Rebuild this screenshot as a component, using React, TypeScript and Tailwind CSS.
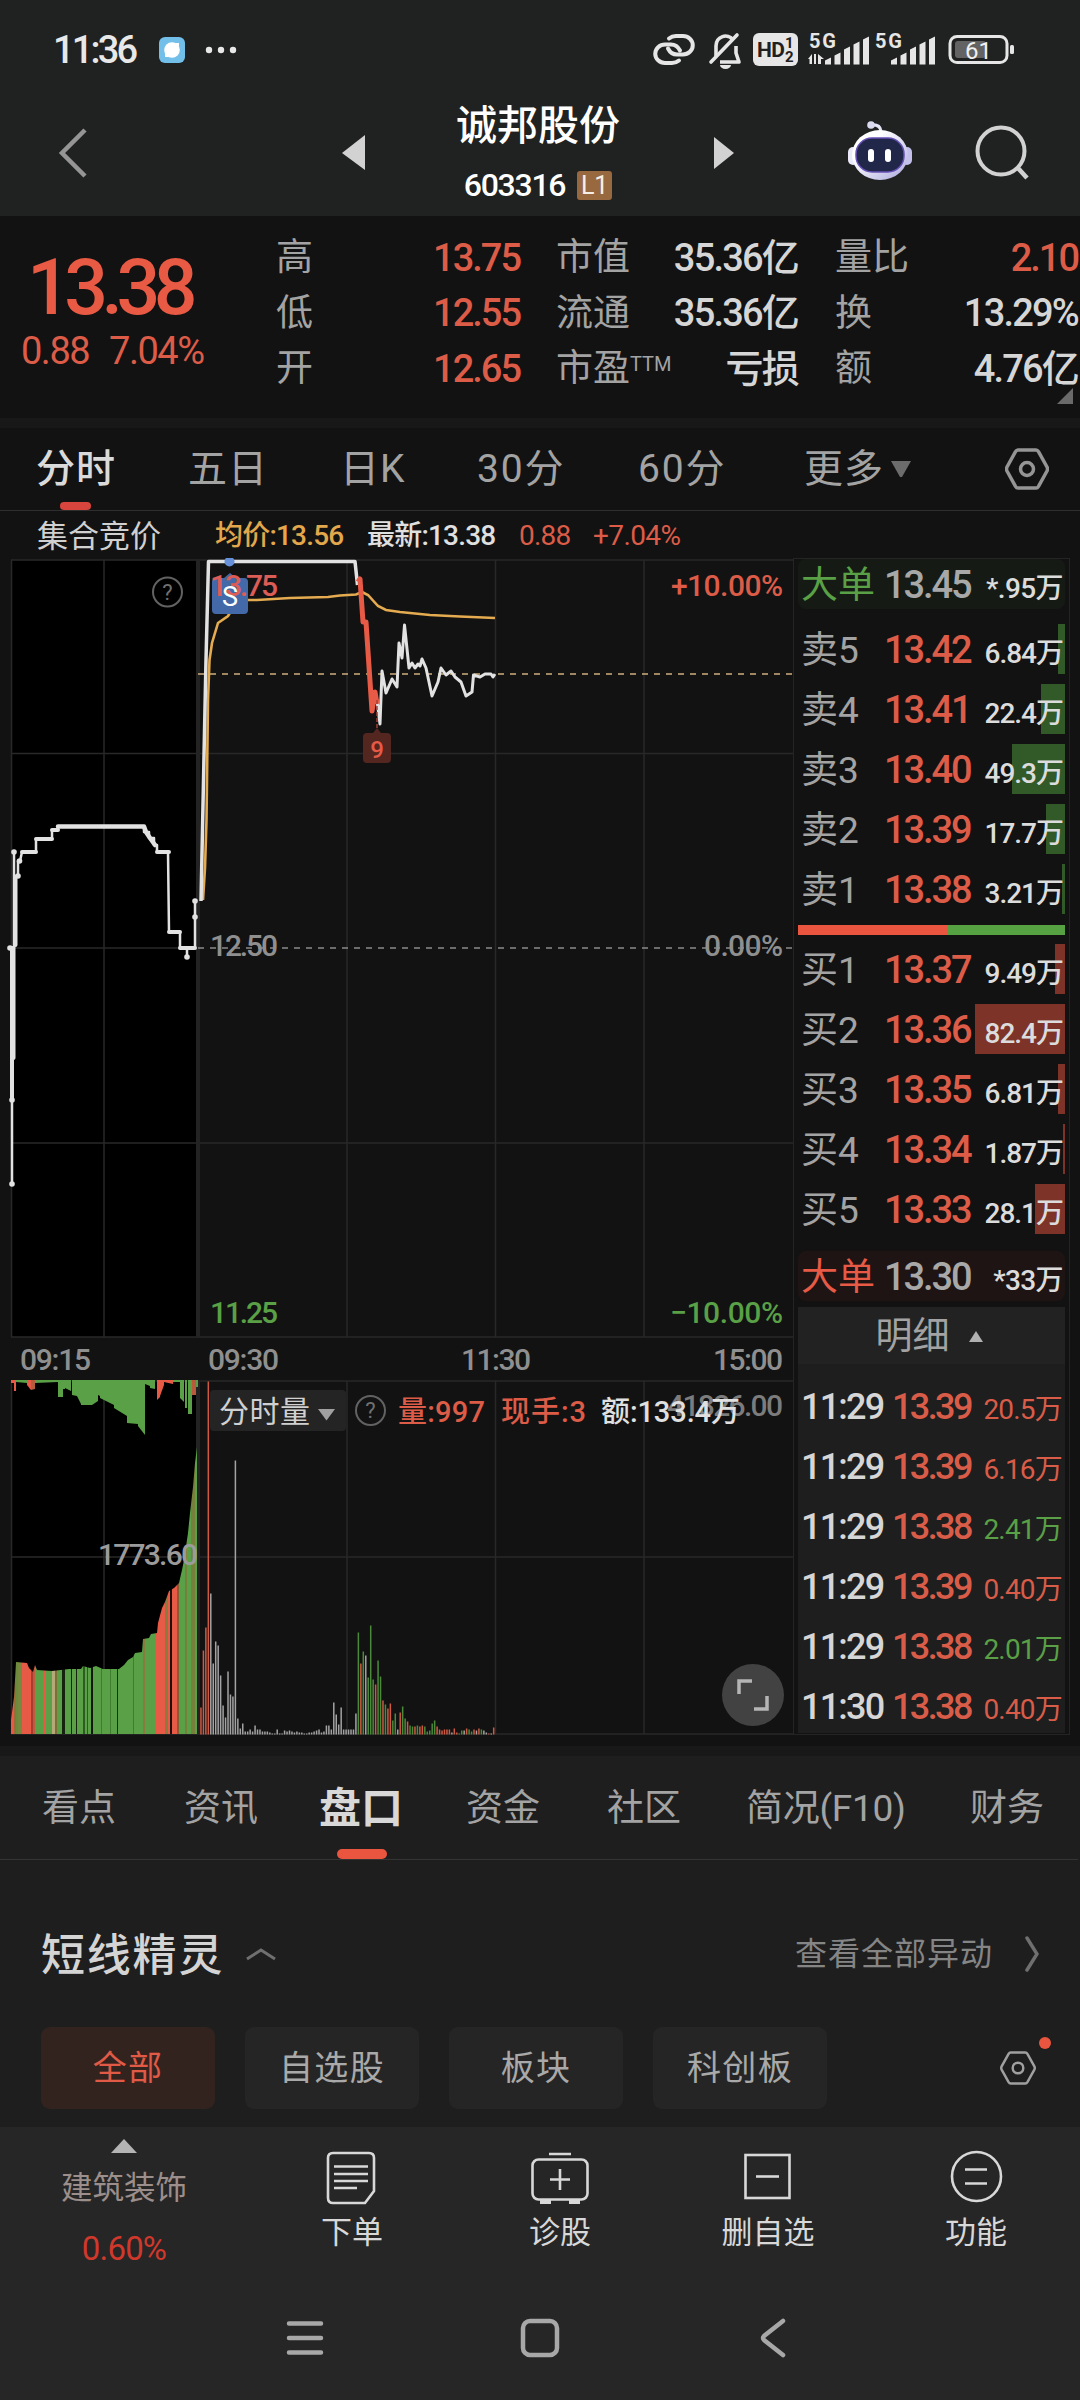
import React from 'react';

type Align = 'start' | 'middle' | 'end';

const RED = '#e65a46';
const GREEN = '#59a046';

const asks = [
  { label: '卖5', price: '13.42', vol: '6.84万', bar: 7 },
  { label: '卖4', price: '13.41', vol: '22.4万', bar: 24 },
  { label: '卖3', price: '13.40', vol: '49.3万', bar: 53 },
  { label: '卖2', price: '13.39', vol: '17.7万', bar: 19 },
  { label: '卖1', price: '13.38', vol: '3.21万', bar: 3 },
];

const bids = [
  { label: '买1', price: '13.37', vol: '9.49万', bar: 10 },
  { label: '买2', price: '13.36', vol: '82.4万', bar: 90 },
  { label: '买3', price: '13.35', vol: '6.81万', bar: 7 },
  { label: '买4', price: '13.34', vol: '1.87万', bar: 2 },
  { label: '买5', price: '13.33', vol: '28.1万', bar: 30 },
];

const ticks = [
  { time: '11:29', price: '13.39', vol: '20.5万', up: true },
  { time: '11:29', price: '13.39', vol: '6.16万', up: true },
  { time: '11:29', price: '13.38', vol: '2.41万', up: false },
  { time: '11:29', price: '13.39', vol: '0.40万', up: true },
  { time: '11:29', price: '13.38', vol: '2.01万', up: false },
  { time: '11:30', price: '13.38', vol: '0.40万', up: true },
];

// one bar per minute, 09:30 - 11:30
const minuteVolumes = [
  27, 84, 107, 353, 141, 71, 93, 89, 59, 29, 17, 63, 40, 38, 274, 16, 6, 11, 3, 3,
  5, 3, 9, 5, 5, 3, 3, 3, 2, 1, 1, 5, 1, 1, 4, 3, 4, 3, 2, 3,
  2, 2, 1, 1, 2, 2, 3, 4, 5, 2, 3, 9, 9, 5, 32, 20, 10, 27, 5, 5,
  5, 5, 5, 21, 102, 71, 83, 79, 57, 109, 55, 50, 74, 58, 34, 30, 26, 31, 14, 21,
  5, 22, 28, 16, 13, 9, 8, 8, 9, 8, 9, 8, 3, 4, 11, 14, 8, 5, 4, 5,
  5, 5, 2, 6, 2, 1, 4, 4, 6, 5, 3, 5, 4, 6, 5, 4, 2, 1, 1, 7,
];
const minuteColors =
  'rrrr' + 'w'.repeat(60) + 'grgwgggrggrgrrggwrggrggrgrrgggggrrrrrrwrrggwrggrwrgwwrwr';

// auction volume outline: x, top
const auctionOutline: [number, number][] = [
  [11, 1720], [14, 1697], [16, 1662], [27, 1663], [29, 1668], [33, 1672], [35, 1665], [37, 1670],
  [52, 1671], [69, 1669], [81, 1669], [83, 1666], [90, 1668], [96, 1666], [103, 1669], [119, 1669],
  [124, 1665], [128, 1660], [133, 1657], [135, 1653], [142, 1652], [143, 1639], [149, 1638],
  [151, 1634], [157, 1633], [158, 1623], [162, 1608], [165, 1602], [169, 1591], [174, 1588],
  [179, 1583], [182, 1570], [184, 1560], [188, 1533], [190, 1513], [193, 1487], [195, 1463], [197, 1447],
];

// stripes painted inside the auction outline: from, to, colour
const auctionStripes: [number, number, string][] = [
  [11, 14, RED], [14, 16, '#9c6b38'], [16, 18, '#6b8a3c'], [18, 22, '#79883f'], [22, 31, RED],
  [31, 33, '#a83c2f'], [33, 35, '#c05a3e'], [35, 43, GREEN], [43, 46, RED], [46, 52, GREEN],
  [52, 55, '#b6a878'], [55, 57, '#7d6f36'], [57, 62, GREEN], [62, 65, '#16240f'], [65, 71, GREEN],
  [71, 72, '#16240f'], [72, 76, GREEN], [76, 77, '#16240f'], [77, 83, GREEN], [83, 85, '#2e5b22'],
  [85, 87, GREEN], [87, 88, '#2e5b22'], [88, 91, GREEN], [91, 93, '#10180c'], [93, 101, GREEN],
  [101, 102, '#3f7d2f'], [102, 110, GREEN], [110, 111, '#3f7d2f'], [111, 117, GREEN],
  [117, 118, '#1b3313'], [118, 133, GREEN], [133, 134, '#3f7d2f'], [134, 143, GREEN],
  [143, 145, '#8a7a40'], [145, 156, GREEN], [156, 165, RED], [165, 168, '#8a7a40'],
  [168, 170, RED], [170, 172, '#1d0f0b'], [172, 177, RED], [177, 179, '#8a5a34'],
  [179, 185, GREEN], [185, 187, '#77803a'], [187, 191, GREEN], [191, 195, '#77803a'], [195, 197, GREEN],
];

// unmatched auction volume, hanging from the top: from, to, left depth, right depth, colour
const hanging: [number, number, number, number, string][] = [
  [11, 14, 3, 3, RED], [14, 16, 11, 11, RED], [16, 27, 2, 3, GREEN], [27, 31, 5, 10, RED],
  [31, 35, 10, 9, '#b85a3c'], [35, 58, 3, 2, GREEN], [58, 63, 17, 17, GREEN], [63, 65, 9, 9, GREEN],
  [65, 71, 8, 11, GREEN], [72, 77, 15, 16, GREEN], [77, 81, 16, 24, GREEN], [81, 92, 25, 25, GREEN],
  [92, 98, 25, 21, GREEN], [98, 100, 15, 16, GREEN], [100, 114, 18, 25, GREEN], [114, 127, 28, 36, GREEN],
  [127, 138, 43, 44, GREEN], [138, 145, 46, 55, GREEN], [145, 150, 4, 6, GREEN], [150, 155, 8, 9, GREEN],
  [157, 160, 20, 17, RED], [160, 164, 16, 5, RED], [164, 173, 2, 4, RED], [173, 180, 2, 2, GREEN],
  [180, 184, 18, 22, GREEN], [185, 187, 28, 28, GREEN], [188, 192, 34, 34, GREEN],
  [192, 196, 15, 15, '#b85a3c'], [196, 198, 7, 7, GREEN],
];

const barColor: Record<string, string> = { r: '#cf5a44', g: '#4b8a3a', w: '#a3a3a3' };

interface LabelProps {
  x: number;
  y: number;
  w: number;
  size?: number;
  fill?: string;
  anchor?: Align;
  weight?: number;
  children: string;
}

const Label = ({ x, y, w, size = 30, fill = '#8f8f8f', anchor = 'start', weight = 500, children }: LabelProps) => (
  <text x={x} y={y} textLength={w} fontSize={size} fontWeight={weight} fill={fill} textAnchor={anchor}>
    {children}
  </text>
);

const SignalBars = ({ x }: { x: number }) => (
  <g fill="#e6e6e6">
    {[6, 11, 17, 22, 27].map((h, i) => (
      <path key={h} d={`M${x + i * 9.5} 64.500 v${-h + 2} l6 -3 v${h + 1} z`} />
    ))}
  </g>
);

const StatusBar = () => (
  <div className="flex h-[100px] items-center justify-between pl-[53px] pr-[64px]">
    <div className="flex items-center">
      <span className="w-[106px] text-[38px] font-medium leading-none tracking-[-2.8px] text-[#e8e8e8]">11:36</span>
      <svg width="80" height="28" viewBox="0 0 80 28">
        <rect x="0" y="1" width="26" height="26" rx="6" fill="#72bfea" />
        <circle cx="13" cy="14" r="7.800" fill="#fff" />
        <path d="M6 17v4h4zM20 11V7h-4z" fill="#fff" />
        <g fill="#e8e8e8">
          <circle cx="50" cy="14" r="3.200" />
          <circle cx="62" cy="14" r="3.200" />
          <circle cx="74" cy="14" r="3.200" />
        </g>
      </svg>
    </div>
    <svg width="364" height="100" viewBox="652 0 364 100">
      <g fill="none" stroke="#e6e6e6" strokeWidth="4" strokeLinecap="round">
        <path d="M669 38.500q3-2.500 7-2.500h7a9.500 9 0 0 1 0 18.500h-6q-6 0-9-6" />
        <path d="M679 60.500q-3 2.500-7 2.500h-7a9.500 9 0 0 1 0-18.500h6q6 0 9 6" />
      </g>
      <g fill="none" stroke="#e6e6e6" strokeWidth="3.600" strokeLinejoin="round">
        <path d="M716 57V46a9.500 10 0 0 1 17-6M736 46v7l3 9h-19" />
        <path d="M711 62 737 35" strokeLinecap="round" />
      </g>
      <path d="M720 65h11a5.500 4 0 0 1-11 0z" fill="#e6e6e6" />
      <rect x="753" y="33" width="45" height="33" rx="6" fill="#e6e6e6" />
      <g fill="#1f2120">
        <text x="757" y="57" fontSize="21" fontWeight="700" textLength="28">HD</text>
        <text x="785" y="48" fontSize="15" fontWeight="700">1</text>
        <text x="785" y="62" fontSize="15" fontWeight="700">2</text>
      </g>
      <g fill="#e6e6e6">
        <text x="809" y="48" fontSize="20" fontWeight="700" textLength="27">5G</text>
        <text x="875" y="48" fontSize="20" fontWeight="700" textLength="27">5G</text>
        <path d="M808 59l4-5v10h-2.500v-5zM814 54h2v10h-2zM818 54l6 5h-3v5h-3z" />
      </g>
      <SignalBars x={825} />
      <SignalBars x={891} />
      <rect x="950" y="36.500" width="57" height="26" rx="7" fill="none" stroke="#e6e6e6" strokeWidth="3" />
      <rect x="955" y="41" width="31" height="17" rx="3" fill="#636363" />
      <rect x="1010" y="45" width="4" height="9" rx="1.500" fill="#e6e6e6" />
      <text x="978.500" y="58.500" fontSize="24" fontWeight="400" fill="#f0f0f0" textAnchor="middle">61</text>
    </svg>
  </div>
);

const RobotIcon = () => (
  <svg width="64" height="60" viewBox="0 0 64 60">
    <defs>
      <linearGradient id="shell" x1="0" y1="0" x2="1" y2="1">
        <stop offset="0.3" stopColor="#ffffff" />
        <stop offset="1" stopColor="#a9a6dd" />
      </linearGradient>
    </defs>
    <path d="M23 4q9-1 10 6" fill="none" stroke="#e3e4f6" strokeWidth="3" />
    <circle cx="23" cy="4" r="3.800" fill="#d9daf0" />
    <rect x="0" y="26" width="10" height="18" rx="5" fill="#e9e9fa" />
    <rect x="54" y="26" width="10" height="18" rx="5" fill="#c3c1ec" />
    <ellipse cx="32" cy="34" rx="28" ry="25" fill="url(#shell)" />
    <rect x="8" y="17" width="48" height="34" rx="16" fill="#212749" stroke="#6650b5" strokeWidth="1.500" />
    <rect x="20" y="28" width="6" height="13" rx="3" fill="#fff" />
    <rect x="37" y="28" width="6" height="13" rx="3" fill="#fff" />
  </svg>
);

const TitleBar = () => (
  <div className="flex h-[116px] items-start">
    <svg className="ml-[56px] mt-[27px]" width="34" height="52" viewBox="0 0 34 52">
      <path d="M29 3 6 26l23 23" fill="none" stroke="#959595" strokeWidth="4.500" />
    </svg>
    <svg className="ml-[252px] mt-[34px]" width="24" height="38" viewBox="0 0 24 38">
      <path d="M0 19 23 1v35z" fill="#d2d2d2" />
    </svg>
    <div className="ml-[68px] flex w-[208px] flex-col items-center">
      <h1 className="mt-[6px] text-[41px] font-medium leading-none text-white">诚邦股份</h1>
      <div className="mt-[22px] flex h-[32px] items-center gap-[12px]">
        <span className="text-[32px] font-medium leading-none tracking-[-1.3px] text-white">603316</span>
        <span className="flex h-[29px] w-[35px] items-center justify-center rounded-[3px] bg-[#98683e] text-[25px] leading-none text-[#f6efe8]">
          L1
        </span>
      </div>
    </div>
    <svg className="ml-[72px] mt-[36px]" width="21" height="34" viewBox="0 0 21 34">
      <path d="M0 1v32l20-16z" fill="#d2d2d2" />
    </svg>
    <div className="ml-[113px] mt-[21px]">
      <RobotIcon />
    </div>
    <svg className="ml-[62px] mt-[24px]" width="58" height="56" viewBox="0 0 58 56">
      <circle cx="27" cy="27" r="23.500" fill="none" stroke="#d2d2d2" strokeWidth="4" />
      <path d="m43 43 10 11" stroke="#d2d2d2" strokeWidth="4.500" />
    </svg>
  </div>
);

interface StatProps {
  name: React.ReactNode;
  value: string;
  red?: boolean;
}

const Stat = ({ name, value, red }: StatProps) => (
  <div className="flex h-[55.5px] items-center justify-between whitespace-nowrap text-[38px] leading-none">
    <span className="text-[37px] text-[#a3a3a3]">{name}</span>
    <span className={red ? 'font-medium tracking-[-2px] text-[#dc5c48]' : 'font-medium tracking-[-1.8px] text-[#d6d6d6]'}>
      {value}
    </span>
  </div>
);

const Quote = () => (
  <section className="flex h-[202px] bg-[#121212] pt-[14px]">
    <div className="w-[276px] pt-[28px]">
      <div className="pl-[27px] text-[77px] font-medium leading-[60px] tracking-[-6.5px] text-[#e85a44]">13.38</div>
      <div className="mt-[13px] flex gap-[20px] pl-[21px] text-[38px] leading-[40px] tracking-[-1.5px] text-[#dc5c48]">
        <span>0.88</span>
        <span>7.04%</span>
      </div>
    </div>
    <div className="w-[244px]">
      <Stat name="高" value="13.75" red />
      <Stat name="低" value="12.55" red />
      <Stat name="开" value="12.65" red />
    </div>
    <div className="ml-[36px] w-[242px]">
      <Stat name="市值" value="35.36亿" />
      <Stat name="流通" value="35.36亿" />
      <Stat
        name={<>市盈<span className="relative top-[-10px] text-[20px]">TTM</span></>}
        value="亏损"
      />
    </div>
    <div className="relative ml-[37px] w-[243px]">
      <Stat name="量比" value="2.10" red />
      <Stat name="换" value="13.29%" />
      <Stat name="额" value="4.76亿" />
      <svg className="absolute right-[5px] top-[158px]" width="16" height="16" viewBox="0 0 16 16">
        <path d="M16 0v16H0z" fill="#6a6a6a" />
      </svg>
    </div>
  </section>
);

const HexIcon = ({ size, stroke, width }: { size: number; stroke: string; width: number }) => (
  <svg width={size} height={size} viewBox="0 0 44 44">
    <path d="M13 3h18q1.500 0 2.500 1.700L42 20q1 2 0 4l-8.500 15.300Q32.500 41 31 41H13q-1.500 0-2.500-1.700L2 24q-1-2 0-4L10.500 4.700Q11.500 3 13 3z" fill="none" stroke={stroke} strokeWidth={width} />
    <circle cx="22" cy="22" r="6.500" fill="none" stroke={stroke} strokeWidth={width} />
  </svg>
);

const PeriodTabs = () => (
  <nav className="flex h-[83px] items-center border-b border-[#2e2e2e] bg-[#121212] pl-[36px] text-[39px] leading-none tracking-[1px] text-[#a3a3a3]">
    <div className="relative flex h-full w-[152px] items-center font-medium text-[#dadada]">
      分时
      <span className="absolute bottom-0 left-[24px] h-[8px] w-[31px] rounded-full bg-[#d8453c]" />
    </div>
    <span className="w-[152px]">五日</span>
    <span className="w-[137px]">日K</span>
    <span className="w-[161px] tracking-[1.8px]">30分</span>
    <span className="w-[166px] tracking-[1.8px]">60分</span>
    <span className="w-[87px]">更多</span>
    <svg className="mr-[94px]" width="20" height="17" viewBox="0 0 20 17">
      <path d="M0 0h20L11 16H9z" fill="#6c6c6c" />
    </svg>
    <HexIcon size={44} stroke="#959595" width={3.5} />
  </nav>
);

const PriceInfo = () => (
  <div className="flex h-[47px] items-center whitespace-nowrap bg-[#121212] pl-[37px] pt-[3px] text-[28px] font-medium leading-none">
    <span className="w-[178px] text-[31px] font-normal text-[#d0d0d0]">集合竞价</span>
    <span className="w-[152px] tracking-[-0.8px] text-[#e3a84b]">均价:13.56</span>
    <span className="w-[152px] tracking-[-0.8px] text-[#e0e0e0]">最新:13.38</span>
    <span className="w-[74px] font-normal tracking-[-0.8px] text-[#dc5c48]">0.88</span>
    <span className="font-normal tracking-[-0.6px] text-[#dc5c48]">+7.04%</span>
  </div>
);

// Price chart and volume chart share one drawing; its units are page pixels from y = 558
const Charts = () => {
  const outline = auctionOutline.map(([x, y]) => `L${x} ${y}`).join(' ');
  return (
    <svg width="793" height="1188" viewBox="0 558 793 1188" className="block shrink-0">
      <defs>
        <clipPath id="auction">
          <path d={`M11 1734 ${outline} L197 1734z`} />
        </clipPath>
      </defs>
      <rect x="11" y="560" width="187" height="777" fill="#000" />
      <rect x="11" y="1381" width="187" height="353" fill="#000" />
      <g fill="none" stroke="#282828" strokeWidth="1.500">
        <path d="M11.500 560V1337M104 560V1337M347 560V1337M495.500 560V1337M644 560V1337" />
        <path d="M11.500 1381V1734M104 1381V1734M347 1381V1734M495.500 1381V1734M644 1381V1734" />
        <path d="M11 560H793M11 753.500H793M11 948H198M11 1143H793M11 1337H793" />
        <path d="M11 1381H793M11 1557H793M11 1734H793" />
        <path d="M198 560V1337M198 1381V1734" strokeWidth="4" stroke="#232323" />
      </g>
      <path d="M198 674H793" stroke="#cdae7c" strokeWidth="1.700" strokeDasharray="6 6" />
      <path d="M198 948H793" stroke="#8a8a8a" strokeWidth="1.700" strokeDasharray="6 6" />

      <circle cx="167.500" cy="592" r="14.500" fill="none" stroke="#626262" strokeWidth="2" />
      <text x="167.500" y="600" fontSize="22" fill="#707070" textAnchor="middle">?</text>

      {/* call auction */}
      <g fill="none" stroke="#e2e2e2" strokeWidth="3.500" strokeLinejoin="round" strokeLinecap="round">
        <path d="M12 1184V948H14V852M14 876H18V861H20L22 852H36V839H52V830H58V826.500H144V832H149V838H154V845H157V852H168L169 932H180V948H187V956V948H195V901" strokeWidth="2.500" />
        <path d="M58 826.500H144L146 832L150 838L155 845" strokeWidth="4.500" />
        <path d="M12 1098V948M13.500 1058V948M15.500 945V877" strokeWidth="4" />
        <path d="M22 852H36M36 839H52M52 830H58M157 852H169M169 932H180M180 948H195" strokeWidth="4" />
      </g>
      <g fill="#e2e2e2">
        {[[12, 1184], [12, 1100], [10, 948], [14, 852], [18, 876], [19.5, 861], [187, 957], [195, 917], [195, 901]].map(([x, y]) => (
          <circle key={`${x}-${y}`} cx={x} cy={y} r="2.800" />
        ))}
      </g>

      {/* continuous session */}
      <path
        d="M203 900L205 868L206.500 820L208 700L209.500 660L212 643L218 623L228 616L236 603L242 600H257L290 598L328 597L340 595.500L356 594.500L362 592L368 595L378 606L386 610L400 612L430 615L460 616.500L495 618"
        fill="none" stroke="#e5ab50" strokeWidth="2.600"
      />
      <g fill="none" stroke="#e2e2e2" strokeWidth="3.500" strokeLinejoin="round">
        <path d="M201 901L206 660L208.500 561.500H355L357.500 585" />
        <path d="M377 700L380 724L382 671L386 693L392 679L397 687L399 643L402 658L404.500 625L409 668L412 663L415 668L418 664L420 666L422 659L426 668L432 696L438 682L441 668L446 675L451 671L455 677L461 682L466 696L472 692L473.500 675L480 677L485 674L491 674L493 677L495 674" strokeWidth="3" />
      </g>
      <path d="M358 582L360 579L363 622L366 622L372 711L375 692L377 704" fill="none" stroke={RED} strokeWidth="5" strokeLinejoin="round" />
      <path d="M377 700V730" stroke="#a04336" strokeWidth="1.500" strokeDasharray="4 2" />
      <path d="M367 733h6l4-5 4 5h6q4 0 4 4v22q0 4-4 4h-20q-4 0-4-4v-22q0-4 4-4z" fill="#532620" />
      <text x="377" y="758" fontSize="24" fontWeight="500" fill={RED} textAnchor="middle">9</text>

      <circle cx="229.500" cy="561.500" r="5" fill="#6690da" />
      <path d="M216 578h8l6-5 6 5h8q4 0 4 4v28q0 4-4 4h-28q-4 0-4-4v-28q0-4 4-4z" fill="#4469a8" />
      <Label x={210} y={596} w={68} fill="#dc5c56">13.75</Label>
      <text x="230" y="606" fontSize="27" fill="#fff" textAnchor="middle">S</text>
      <Label x={210} y={956} w={68}>12.50</Label>
      <Label x={210} y={1323} w={68} fill={GREEN}>11.25</Label>
      <Label x={783} y={596} w={112} fill="#dc5c48" anchor="end">+10.00%</Label>
      <Label x={783} y={956} w={79} anchor="end">0.00%</Label>
      <Label x={783} y={1323} w={113} fill={GREEN} anchor="end">−10.00%</Label>

      <Label x={20} y={1370} w={71}>09:15</Label>
      <Label x={208} y={1370} w={71}>09:30</Label>
      <Label x={461} y={1370} w={70}>11:30</Label>
      <Label x={783} y={1370} w={70} anchor="end">15:00</Label>

      {/* volume */}
      {hanging.map(([x1, x2, a, b, c]) => (
        <path key={x1} d={`M${x1} 1380H${x2}V${1380 + b}L${x1} ${1380 + a}z`} fill={c} />
      ))}
      <g clipPath="url(#auction)">
        {auctionStripes.map(([a, b, c]) => (
          <rect key={a} x={a} y="1440" width={b - a} height="294" fill={c} />
        ))}
      </g>
      {minuteVolumes.map((h, i) => (
        <rect key={i} x={200.2 + i * 2.46} y={1734.5 - h} width="1.500" height={h} fill={barColor[minuteColors[i]] || barColor.r} />
      ))}
      <Label x={198} y={1565} w={100} anchor="end" fill="#9b9b9b">1773.60</Label>
      <Label x={783} y={1416} w={116} anchor="end" fill="#7c7c7c">41826.00</Label>

      <rect x="210" y="1390" width="136" height="41" rx="4" fill="#242424" />
      <Label x={219} y={1422} w={91} fill="#d0d0d0" weight={400}>分时量</Label>
      <path d="M318 1409h17l-8.500 11.500z" fill="#a0a0a0" />
      <circle cx="370.500" cy="1410.500" r="14.500" fill="none" stroke="#626262" strokeWidth="2" />
      <text x="370.500" y="1418" fontSize="22" fill="#707070" textAnchor="middle">?</text>
      <Label x={398} y={1422} w={87} fill="#dc5c48" size={29}>量:997</Label>
      <Label x={501} y={1422} w={85} fill="#dc5c48" size={29}>现手:3</Label>
      <Label x={601} y={1422} w={139} fill="#e0e0e0" size={29}>额:133.4万</Label>

      <circle cx="753" cy="1695" r="31" fill="#424242" />
      <path d="M739 1694V1681H752M767 1696V1709H754" fill="none" stroke="#b5b5b5" strokeWidth="3.500" />
    </svg>
  );
};

interface BookRow {
  label: string;
  price: string;
  vol: string;
  bar: number;
}

const OrderRow = ({ row, sell }: { row: BookRow; sell?: boolean }) => (
  <div className="relative flex h-[50px] items-center whitespace-nowrap leading-none">
    <span
      className={sell ? 'absolute right-0 top-0 h-full bg-[#325a29]' : 'absolute right-0 top-0 h-full bg-[#7e3329]'}
      style={{ width: row.bar }}
    />
    <div className="relative flex w-full items-baseline pl-[3px] pr-[2px] pt-[2px]">
      <span className="w-[83px] text-[37px] text-[#a3a3a3]">{row.label}</span>
      <span className="text-[38px] font-medium tracking-[-2.1px] text-[#dc5c48]">{row.price}</span>
      <span className="ml-auto text-[28px] font-medium tracking-[-1px] text-[#dcdcdc]">{row.vol}</span>
    </div>
  </div>
);

const BigOrder = ({ price, vol, sell }: { price: string; vol: string; sell?: boolean }) => (
  <div className={sell ? 'flex h-[50px] items-center rounded-lg bg-[#151b14]' : 'flex h-[50px] items-center rounded-lg bg-[#1d1413]'}>
    <div className="flex w-full items-baseline whitespace-nowrap pl-[3px] pr-[2px] pt-[2px] leading-none">
      <span className={sell ? 'w-[83px] text-[37px] text-[#59a046]' : 'w-[83px] text-[37px] text-[#e65a46]'}>大单</span>
      <span className="text-[38px] font-medium tracking-[-2.1px] text-[#a8a8a8]">{price}</span>
      <span className="ml-auto text-[28px] font-medium tracking-[-0.6px] text-[#dcdcdc]">{vol}</span>
    </div>
  </div>
);

const OrderBook = () => (
  <aside className="h-[1177px] w-[277px] border border-[#242424] px-[4px]">
    <BigOrder price="13.45" vol="*.95万" sell />
    <div className="mt-[15px] flex flex-col gap-[10px]">
      {asks.map((row) => <OrderRow key={row.label} row={row} sell />)}
    </div>
    <div className="mt-[11px] flex h-[10px]">
      <div className="w-[150px] bg-[#e9553f]" />
      <div className="flex-1 bg-[#56a243]" />
    </div>
    <div className="mt-[9px] flex flex-col gap-[10px]">
      {bids.map((row) => <OrderRow key={row.label} row={row} />)}
    </div>
    <div className="mt-[17px]">
      <BigOrder price="13.30" vol="*33万" />
    </div>
    <div className="mt-[6px] flex h-[57px] items-center justify-center gap-[19px] bg-[#222222] pr-[5px] pt-[2px] text-[37px] leading-none text-[#a3a3a3]">
      明细
      <svg width="14" height="11" viewBox="0 0 14 11">
        <path d="M7 0l7 11H0z" fill="#b0b0b0" />
      </svg>
    </div>
    <div className="h-[369px] bg-[#1e1e1e] pt-[13px]">
      {ticks.map((t, i) => (
        <div key={i} className="flex h-[60px] items-center">
          <div className="flex w-full items-baseline whitespace-nowrap pl-[3px] pr-[3px] leading-none">
            <span className="w-[91px] text-[36px] font-medium tracking-[-1.8px] text-[#d6d6d6]">{t.time}</span>
            <span className="text-[36px] font-medium tracking-[-2.6px] text-[#d95c48]">{t.price}</span>
            <span className={t.up ? 'ml-auto text-[28px] tracking-[-0.8px] text-[#d95c48]' : 'ml-auto text-[28px] tracking-[-0.8px] text-[#59a046]'}>
              {t.vol}
            </span>
          </div>
        </div>
      ))}
    </div>
  </aside>
);

const InfoTabs = () => (
  <nav className="mr-[2px] flex h-[104px] items-center whitespace-nowrap border-b border-[#343434] pl-[42px] text-[37px] leading-none text-[#a3a3a3]">
    <span className="w-[142px] pt-[2px]">看点</span>
    <span className="w-[135px] pt-[2px]">资讯</span>
    <div className="relative flex h-full w-[147px] items-center pt-[2px] text-[42px] font-bold text-[#d8d8d8]">
      盘口
      <span className="absolute bottom-0 left-[18px] h-[10px] w-[50px] rounded-[5px] bg-[#e9553f]" />
    </div>
    <span className="w-[141px] pt-[2px]">资金</span>
    <span className="w-[139px] pt-[2px]">社区</span>
    <span className="w-[224px] pt-[2px] tracking-[-0.3px]">简况(F10)</span>
    <span className="pt-[2px]">财务</span>
  </nav>
);

const Movers = () => (
  <section className="h-[267px]">
    <div className="flex h-[188px] items-center pl-[41px] pr-[41px] leading-none">
      <h2 className="pt-[3px] text-[44px] font-medium tracking-[1.8px] text-[#d4d4d4]">短线精灵</h2>
      <svg className="ml-[22px]" width="30" height="14" viewBox="0 0 30 14">
        <path d="M1 12 15 3l14 9" fill="none" stroke="#6f6f6f" strokeWidth="3" />
      </svg>
      <span className="ml-auto text-[32px] tracking-[1px] text-[#858585]">查看全部异动</span>
      <svg className="ml-[32px]" width="14" height="36" viewBox="0 0 14 36">
        <path d="M2 2l10 16L2 34" fill="none" stroke="#6f6f6f" strokeWidth="3.500" strokeLinecap="round" />
      </svg>
    </div>
    <div className="mt-[-21px] flex items-center gap-[30px] pl-[41px] text-[34px] leading-none tracking-[1.3px]">
      <span className="flex h-[82px] w-[174px] items-center justify-center rounded-[9px] bg-[#33231f] text-[#e05a46]">全部</span>
      {['自选股', '板块', '科创板'].map((name) => (
        <span key={name} className="flex h-[82px] w-[174px] items-center justify-center rounded-[9px] bg-[#252525] text-[#a9a9a9]">
          {name}
        </span>
      ))}
      <div className="relative ml-[143px]">
        <HexIcon size={36} stroke="#a0a0a0" width={3} />
        <span className="absolute right-[-15px] top-[-13px] h-[12px] w-[12px] rounded-full bg-[#e9553f]" />
      </div>
    </div>
  </section>
);

const actionIcons: Record<string, React.ReactNode> = {
  下单: (
    <>
      <path d="M10 4h36q5 0 5 5v33l-9 12H10q-5 0-5-5V9q0-5 5-5z" />
      <path d="M11 17.500h34M11 25h34M11 32h34M11 39h23" strokeWidth="2.600" />
    </>
  ),
  诊股: (
    <>
      <rect x="1.500" y="10.500" width="55" height="40" rx="6" />
      <path d="M18 5h22M19 30.500h20M29 20v21" />
      <path d="M9 53h11M38 53h11" strokeWidth="4" />
    </>
  ),
  删自选: (
    <>
      <rect x="6.500" y="6" width="44" height="43" />
      <path d="M17 27.500h23" />
    </>
  ),
  功能: (
    <>
      <circle cx="29.500" cy="27.500" r="24.500" />
      <path d="M18 20.500h22M18 34.500h22" />
    </>
  ),
};

const ActionBar = () => (
  <footer className="flex h-[156px] whitespace-nowrap leading-none">
    <div className="flex w-[248px] flex-col items-center pt-[12px]">
      <svg width="26" height="14" viewBox="0 0 26 14">
        <path d="M13 0l13 14H0z" fill="#b4b4b4" />
      </svg>
      <span className="mt-[20px] text-[31.5px] text-[#9c8e8a]">建筑装饰</span>
      <span className="mt-[27px] text-[33px] tracking-[-0.8px] text-[#cf382b]">0.60%</span>
    </div>
    {Object.keys(actionIcons).map((name) => (
      <div key={name} className="flex w-[208px] flex-col items-center pt-[22px]">
        <svg width="58" height="60" viewBox="0 0 58 60" fill="none" stroke="#d8d8d8" strokeWidth="2.600">
          {actionIcons[name]}
        </svg>
        <span className="mt-[8px] text-[31px] text-[#d8d8d8]">{name}</span>
      </div>
    ))}
  </footer>
);

const SystemNav = () => (
  <div className="flex h-[117px] items-start pl-[286px] pt-[34px]">
    <svg width="38" height="42" viewBox="0 0 38 42" stroke="#a8a8a8" strokeWidth="4.500" strokeLinecap="round">
      <path d="M3 6.500h32M3 21h32M3 35.500h32" />
    </svg>
    <svg className="ml-[195px]" width="42" height="42" viewBox="0 0 42 42" fill="none" stroke="#a8a8a8" strokeWidth="4.500">
      <rect x="4" y="4" width="34" height="34" rx="7" />
    </svg>
    <svg className="ml-[199px]" width="28" height="42" viewBox="0 0 28 42" fill="none" stroke="#a8a8a8" strokeWidth="4.500" strokeLinecap="round">
      <path d="M23 4 4 19q-2 2 0 4l19 15" />
    </svg>
  </div>
);

export default function App() {
  return (
    <main className="h-[2400px] w-[1080px] overflow-hidden bg-[#1e1e1e] font-[Roboto,'Noto_Sans_CJK_SC',sans-serif]">
      <header className="bg-[#202221]">
        <StatusBar />
        <TitleBar />
      </header>
      <Quote />
      <div className="h-[10px] bg-[#181818]" />
      <PeriodTabs />
      <PriceInfo />
      <div className="flex h-[1188px] bg-[#121212]">
        <Charts />
        <OrderBook />
      </div>
      <div className="h-[10px] bg-[#181818]" />
      <InfoTabs />
      <Movers />
      <div className="h-[273px] bg-[#262626]">
        <ActionBar />
        <SystemNav />
      </div>
    </main>
  );
}
